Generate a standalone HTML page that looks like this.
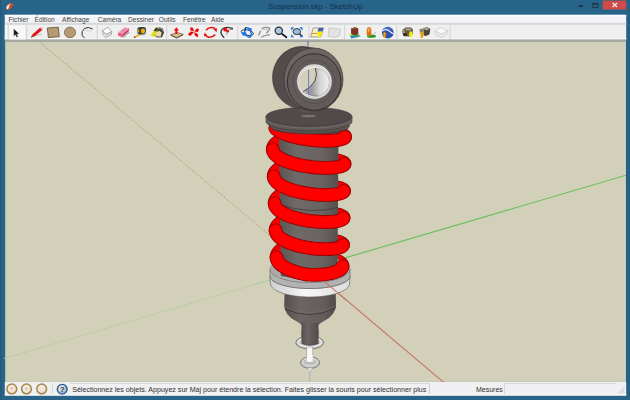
<!DOCTYPE html>
<html><head><meta charset="utf-8">
<style>
html,body{margin:0;padding:0;}
body{width:630px;height:400px;overflow:hidden;position:relative;background:#286489;font-family:"Liberation Sans",sans-serif;}
.abs{position:absolute;}
#ttext{left:0.5px;top:2px;width:630px;text-align:center;font-size:7.7px;color:#17304a;}
#menu{left:0;top:0;width:630px;height:30px;}
.mi{position:absolute;top:16.4px;font-size:6.6px;color:#444;}
</style></head><body>
<svg class="abs" style="left:0;top:0" width="630" height="400" viewBox="0 0 630 400">
  <rect x="0" y="0" width="630" height="400" fill="#286489"/>
  <rect x="0" y="0" width="1.5" height="400" fill="#245a7c"/>
  <rect x="628.2" y="0" width="1.8" height="400" fill="#2a5f80"/>
  <rect x="626.2" y="12" width="2" height="386" fill="#1f6391"/>
  <!-- menu bar -->
  <rect x="4.8" y="14.75" width="621.4" height="10" fill="#f2f4f7"/>
  <rect x="4.8" y="14.9" width="621.4" height="1.6" fill="#fbfcfd"/>
  <rect x="4.8" y="22.8" width="621.4" height="2" fill="#d9d9d9"/>
  <!-- toolbar -->
  <rect x="4.8" y="24.8" width="621.4" height="15" fill="#efefef"/>
  <rect x="4.8" y="38" width="621.4" height="1.5" fill="#f7f7f7"/>
  <rect x="4.8" y="39.5" width="621.4" height="2.1" fill="#aaa79c"/>
  <!-- viewport -->
  <rect x="5.2" y="41.6" width="620" height="340.3" fill="#d3d0b9"/>
  <rect x="624.6" y="41.6" width="1.2" height="340.3" fill="#dedbc8"/>
  <!-- status -->
  <rect x="4.8" y="381.9" width="621.4" height="13.8" fill="#f0f0f2"/>
  <rect x="4.8" y="393.6" width="621.4" height="1.8" fill="#f6f5f3"/>
</svg>
<div id="title" class="abs" style="left:0;top:0;width:630px;height:14px;">
  <svg class="abs" style="left:0;top:0" width="630" height="14" viewBox="0 0 630 14">
    <path d="M13.6 4 Q12.5 3.2 11 3.6 L9.5 4 Q7 5 6.3 7.5 Q6.2 9.2 7.6 9.8 Q9.5 10 11 8.5 Z" fill="#d84a2c"/>
    <path d="M11.2 3.5 Q9.5 3.2 8 4.6 L7.8 7 Q9.5 6.5 11.2 3.5 Z" fill="#f0a060"/>
    <path d="M8.2 4.8 Q6.4 5.8 6.3 8 Q6.6 9.5 7.8 9.6 Q8.6 8 9.4 6 Z" fill="#f4f0ea"/>
    <rect x="578.5" y="5.3" width="4.5" height="1.6" fill="#1b3040"/>
    <rect x="592.8" y="3.3" width="5.2" height="4.2" fill="none" stroke="#1b3040" stroke-width="0.8"/>
    <rect x="592.8" y="3.3" width="5.2" height="1.2" fill="#1b3040"/>
    <rect x="602.7" y="0.6" width="23.5" height="8.9" fill="#cf4b48"/>
    <path d="M612.6 3.1 L617 7.1 M617 3.1 L612.6 7.1" stroke="#f8eaea" stroke-width="1.3"/>
  </svg>
  <div id="ttext" class="abs">Suspension.skp - SketchUp</div>
</div>
<div id="menu" class="abs">
  <span class="mi" style="left:8.6px">Fichier</span>
  <span class="mi" style="left:34.6px">Édition</span>
  <span class="mi" style="left:62px">Affichage</span>
  <span class="mi" style="left:97.8px">Caméra</span>
  <span class="mi" style="left:128px">Dessiner</span>
  <span class="mi" style="left:158.8px">Outils</span>
  <span class="mi" style="left:183px">Fenêtre</span>
  <span class="mi" style="left:211px">Aide</span>
</div>
<svg class="abs" style="left:0;top:0" width="630" height="41" viewBox="0 0 630 41">
<defs>
<filter id="soft" x="-20%" y="-20%" width="140%" height="140%"><feGaussianBlur stdDeviation="0.25"/></filter>
</defs>
<rect x="4.8" y="25" width="2.8" height="14" fill="#f7f7f7"/>
<rect x="7.6" y="25.4" width="1.5" height="13.8" fill="#dcdcdc"/>
<rect x="9.2" y="25.3" width="15.8" height="14.2" fill="#f8f8f8"/>
<g fill="#d9d9d9">
<rect x="25.8" y="25.5" width="1.5" height="13.5"/>
<rect x="96.6" y="25.5" width="1.3" height="13.5"/>
<rect x="166" y="25.5" width="1.3" height="13.5"/>
<rect x="237" y="25.5" width="1.3" height="13.5"/>
<rect x="308.3" y="25.5" width="1.3" height="13.5"/>
<rect x="344" y="25.5" width="1.3" height="13.5"/>
<rect x="396" y="25.5" width="1.3" height="13.5"/>
<rect x="449.5" y="25.5" width="1.3" height="13.5"/>
</g>
<g filter="url(#soft)">
<!-- select arrow -->
<path d="M13.6 28.4 L19.4 34 L16.9 34.2 L18.2 36.8 L16.7 37.4 L15.4 34.8 L13.6 36.4 Z" fill="#181818" stroke="#ffffff" stroke-width="0.4"/>
<!-- pencil -->
<path d="M33.8 35.8 L41.8 34.2" stroke="#b4b4b4" stroke-width="0.9"/>
<path d="M31.2 37.5 L32.6 34.2 L40 27.8 L42.2 30 L34.8 36.2 Z" fill="#dc1515"/>
<path d="M40 27.8 L41 27 L43 29.1 L42.2 30 Z" fill="#f090b0"/>
<path d="M31.2 37.5 L31.9 35.4 L33.3 36.8 Z" fill="#2a2a2a"/>
<path d="M32.2 35.2 L33.4 36.6" stroke="#e8d870" stroke-width="0.5"/>
<!-- rectangle -->
<path d="M47.3 28 L58.3 27.2 L59.3 36.6 L48.4 37.6 Z" fill="#b39b72" stroke="#5e4b30" stroke-width="0.8"/>
<!-- circle -->
<ellipse cx="70" cy="32.4" rx="5.6" ry="5.3" fill="#b49a72" stroke="#6d5a3e" stroke-width="0.7"/>
<!-- arc -->
<path d="M92.8 29 Q88 26.2 84.5 28.5 Q80.8 31.5 82.2 35.5 Q83 37 84.6 37.7" fill="none" stroke="#333" stroke-width="1"/>
<path d="M85.5 30.8 L91.2 30.6" stroke="#d0d0d0" stroke-width="0.9"/>
<!-- component box -->
<path d="M102.4 30.6 L108 27.2 L111.7 31.7 L105.8 34.5 Z" fill="#ffffff" stroke="#9a9a9a" stroke-width="0.8"/>
<path d="M102.4 30.6 L103.4 35 L105.8 37.7 L111.4 34.4 L111.7 31.7 L105.8 34.5 Z" fill="#ececec" stroke="#9a9a9a" stroke-width="0.8"/>
<path d="M106 36 L111 33.2" stroke="#bdbdbd" stroke-width="0.5"/>
<!-- eraser -->
<path d="M118.2 32.6 L124.6 27.3 L129.2 28.3 L122.8 33.8 Z" fill="#f59ab6"/>
<path d="M118.2 32.6 L122.8 33.8 L122.2 37.4 L118 35.6 Z" fill="#e9607f"/>
<path d="M122.8 33.8 L129.2 28.3 L128.6 31.6 L122.2 37.4 Z" fill="#cc4565"/>
<path d="M122.6 37.6 L128.8 31.8 L129.8 32.4 L123.6 37.8 Z" fill="#6a6a6a" opacity="0.55"/>
<path d="M121.5 31.8 L125.5 28.6" stroke="#b04060" stroke-width="0.7" opacity="0.7"/>
<!-- tape measure -->
<path d="M134.2 36.8 L140 33.2 L141 34.6 L135.4 37.8 Z" fill="#e5b000"/>
<path d="M134 36.6 L135.2 37.8" stroke="#333" stroke-width="1.1"/>
<path d="M137.4 28.5 Q138 26.9 140 26.9 L144 26.9 Q146 27.1 146 29.3 L145.8 32.6 Q145.4 34.4 143.4 34.4 L139.5 34.4 Q137.2 34.2 137.2 32 Z" fill="#3a4048"/>
<ellipse cx="143" cy="31" rx="2.1" ry="2.6" fill="#f3b400"/>
<path d="M137.2 29.5 L139 29.2 L139.2 32.4 L137.4 32.6 Z" fill="#d9a800"/>
<path d="M140 35 L146 34.8" stroke="#9a9a9a" stroke-width="0.8" opacity="0.7"/>
<!-- paint bucket -->
<path d="M155 29.4 L159.5 27.2 L162.8 28.6 L164 32.8 L162 37.2 L156.6 37.6 L154.6 34.4 Z" fill="#404040"/>
<path d="M155.6 32.2 L159.4 30.8 L161.6 32.6 L160.8 36.4 L156.6 36.6 L155.2 34.2 Z" fill="#e9dcaa"/>
<path d="M158 28.2 L162 28.8 L163 31.6" stroke="#a0a0a0" stroke-width="0.8" fill="none"/>
<path d="M150.6 35.6 L156 27.6 L158.2 28 L154.2 37 Z" fill="#e6de00"/>
<path d="M153.6 30.8 L156 27.6 L158.2 28 L156 31.6 Z" fill="#3a3a22"/>
<!-- push/pull -->
<path d="M170.6 34.8 L177 32.5 L183.2 34.3 L176.8 37.7 Z" fill="#d4c096" stroke="#6e5430" stroke-width="0.7"/>
<path d="M170.6 34.8 L170.9 35.8 L176.8 38.4 L183.2 35.3 L183.2 34.3 L176.8 37.7 Z" fill="#5f4626"/>
<path d="M176.3 27.2 L178.9 30.5 L177.4 30.5 L177.4 34 L175.3 34 L175.3 30.5 L173.8 30.5 Z" fill="#ee0b0b"/>
<!-- move -->
<g fill="#e80a0a">
<path d="M194.3 31.6 L192.6 27.6 L190.2 27.6 L190.4 30.4 Z"/>
<path d="M194.3 31.6 L197.6 32.2 L199.2 29.6 L197 28.2 Z"/>
<path d="M194 32.2 L190.6 31.6 L187.8 34.6 L190.4 36 Z"/>
<path d="M194.3 32 L194.8 35.4 L197.4 37.2 L198.4 34.4 Z"/>
</g>
<!-- rotate -->
<path d="M206 30.2 Q208.4 27.2 212.2 27.5 Q214.6 27.8 215.5 29.6" fill="none" stroke="#e01414" stroke-width="1.5"/>
<path d="M215.3 34.6 Q212.8 37.6 209 37.3 Q206.6 37 205.7 35.2" fill="none" stroke="#e01414" stroke-width="1.5"/>
<path d="M213.4 29.2 L217 28.2 L216.6 32.2 Z" fill="#e01414"/>
<path d="M207.6 35.4 L204 36.6 L204.4 32.6 Z" fill="#e01414"/>
<!-- offset -->
<path d="M224.2 37.7 Q219.6 33.6 221.6 29.8 Q223.6 27.2 227 27.4 Q231 27.6 233 28.6" fill="none" stroke="#3a3a3a" stroke-width="1.3"/>
<path d="M226.6 34.6 Q226.8 31 229 29.8 Q231 29.2 233 29.5" fill="none" stroke="#8a8a8a" stroke-width="0.9"/>
<circle cx="225.2" cy="29.4" r="2" fill="#ee0a0a"/>
<circle cx="227.7" cy="31.2" r="1.3" fill="#d81010"/>
<!-- orbit -->
<ellipse cx="247.3" cy="32.6" rx="6.2" ry="2.6" fill="none" stroke="#2f2f2f" stroke-width="0.9" transform="rotate(12 247.3 32.6)"/>
<ellipse cx="248" cy="32.4" rx="2.8" ry="5" fill="none" stroke="#1f72ea" stroke-width="1.6" transform="rotate(-25 248 32.4)"/>
<path d="M241 32.6 L245 32 L246.8 35.6 L243 35.8 Z" fill="#1f72ea"/>
<path d="M248.2 27.6 L252 28.4 L251.4 31 L248.6 30 Z" fill="#1f72ea"/>
<path d="M246 27 L245 30.5" stroke="#2a2a2a" stroke-width="1"/>
<!-- pan -->
<path d="M258.6 35.6 L260.6 30.8 M261.6 28.8 Q265.6 26.6 269.6 28 Q270 30 268.2 31 L266.4 33.4 M261 37.2 Q265 35 269.8 34.6" fill="none" stroke="#8c8c8c" stroke-width="1.3"/>
<path d="M262.5 29.6 Q265 29.2 267.8 29.6" fill="none" stroke="#b0b0b0" stroke-width="0.8"/>
<!-- zoom -->
<path d="M281 33.1 L286.4 37.3" stroke="#1a1a1a" stroke-width="1.8" stroke-linecap="round"/>
<circle cx="278.8" cy="30.8" r="3.6" fill="#a8c8e8" stroke="#2a2a2a" stroke-width="1.2"/>
<!-- zoom extents -->
<ellipse cx="296.8" cy="31.6" rx="3.8" ry="3" fill="#98bcd8" stroke="#333" stroke-width="1"/>
<path d="M299.6 34 L302.3 36.8" stroke="#1a1a1a" stroke-width="1.4"/>
<g fill="#1f6fe6">
<path d="M291 27.3 L294.2 27.4 L291.2 30.4 Z"/>
<path d="M302.6 27.3 L302.5 30.4 L299.4 27.4 Z"/>
<path d="M291 37.3 L291.2 34.2 L294.2 37.2 Z"/>
<path d="M302.6 37.3 L299.5 37.3 L302.5 34.3 Z"/>
</g>
<!-- photo texture -->
<path d="M313.2 28 L323.6 27.8 L320.7 36.9 L310.6 37 Z" fill="#f8f0c0" stroke="#7a7a7a" stroke-width="0.7"/>
<path d="M318.5 28 L323.5 27.9 L322.4 31.6 L317.5 31.8 Z" fill="#4060b0"/>
<path d="M317.5 31.8 L322.4 31.6 L320.7 36.9 L318 37 Z" fill="#eeee00"/>
<path d="M311.6 33.6 L317.2 33.4" stroke="#e88a1a" stroke-width="1"/>
<!-- next (gray) -->
<path d="M329 28 L334 28.6 L340.5 29.4 L339.5 35.8 L334.5 37.5 L328.2 36.4 Z" fill="#e2e2e2" stroke="#c4c4c4" stroke-width="0.8"/>
<!-- get models -->
<path d="M347.8 34 L351 33 L360.8 36.2 L357 38 Z" fill="#eeee88"/>
<path d="M349.6 35.6 L358.5 34.6 L360.8 36.2 L351.5 38.3 Z" fill="#3bb050"/>
<path d="M350.5 36.8 L359 35.8 L358 37 L351.2 38.5 Z" fill="#2a88d8"/>
<path d="M351 28.4 L355 27.2 L358.2 28.2 L358.3 34.4 L354.5 35.2 L351.2 34.3 Z" fill="#7a3520"/>
<path d="M351 28.4 L355 27.2 L358.2 28.2 L354.5 29 Z" fill="#9c5a3c"/>
<!-- share model -->
<ellipse cx="371.5" cy="36.2" rx="4.5" ry="1.6" fill="#2c9a2a"/>
<path d="M372.5 35 L376 32" stroke="#a8a8a8" stroke-width="0.7"/>
<ellipse cx="369" cy="31.6" rx="2.4" ry="4.6" fill="#e27010"/>
<ellipse cx="368.6" cy="30" rx="1.2" ry="2.4" fill="#f3a040"/>
<!-- globe -->
<circle cx="387.8" cy="32.6" r="5.9" fill="#2d4fb4"/>
<path d="M382.5 31 Q386 28 390 31.5 Q392.5 34 393.5 33" fill="none" stroke="#e8eef8" stroke-width="1.2"/>
<path d="M384 28.5 Q388 27 392 29" fill="none" stroke="#6a90d8" stroke-width="0.8"/>
<path d="M384.6 31.8 L387 34.4 L385.6 34.4 L385.6 37.8 L383.6 37.8 L383.6 34.4 L382.2 34.4 Z" fill="#f7a000"/>
<!-- component share 1 -->
<path d="M402.4 30 L405.5 27.4 L411 27.6 L413 29.5 L412.6 34.8 L409 36.6 L404 36.2 L402.6 33.5 Z" fill="#5e554a"/>
<path d="M405 28.4 L410.4 28.4 L411.8 30 L406.5 30.6 Z" fill="#b8a886"/>
<path d="M402.6 30.6 L404.6 29.6 L405 33 L403 33.4 Z" fill="#a89878"/>
<path d="M402.8 33.6 L406 33.4 L407 35.6 L403.6 35.8 Z" fill="#1e1e1e"/>
<path d="M409.3 31.4 L412.4 31.4 L412.4 34.2 L413.4 34.2 L410.8 37.6 L408.2 34.2 L409.3 34.2 Z" fill="#eeee00"/>
<!-- component share 2 -->
<path d="M423.4 28 L427.6 27.2 L430.4 29 L429.4 34.4 L426 36 L423.6 35.4 Z" fill="#4a443c"/>
<path d="M423.6 28.4 L427.4 27.6 L429.6 29.2 L425.6 30.4 Z" fill="#b0a080"/>
<path d="M419.4 29.6 L422 28.4 L423.4 29.6 L423 32.2 L420 32.4 Z" fill="#8a8070"/>
<path d="M421.8 31.4 L424.4 34 L423 34 L423 38 L420.6 38 L420.6 34 L419.2 34 Z" fill="#f29a00"/>
<!-- component share 3 faded -->
<path d="M435 31 L440.6 27.4 L447.4 30.6 L441.8 34.4 Z" fill="#f8f8f8" stroke="#c8c8c8" stroke-width="0.7"/>
<path d="M435 31 L435.6 34.4 L441.6 37.8 L447 34.2 L447.4 30.6 L441.8 34.4 Z" fill="#ededed" stroke="#c8c8c8" stroke-width="0.7"/>
</g>
</svg>
<svg class="abs" style="left:0;top:0" width="630" height="400" viewBox="0 0 630 400">
<defs>
<clipPath id="axclipR"><path d="M318 281.5 L360 281.5 L360 300 L338 300 L337 292 L318 292 Z"/></clipPath>
<clipPath id="vclip"><rect x="4" y="41" width="622" height="341"/></clipPath>
<linearGradient id="gCyl" x1="0" y1="0" x2="1" y2="0">
 <stop offset="0" stop-color="#5a5453"/><stop offset="0.3" stop-color="#6f6967"/><stop offset="0.72" stop-color="#696362"/><stop offset="1" stop-color="#544e4d"/></linearGradient>
<linearGradient id="gBulb" x1="0" y1="0" x2="1" y2="0">
 <stop offset="0" stop-color="#554d4d"/><stop offset="0.3" stop-color="#6b6463"/><stop offset="0.75" stop-color="#645d5c"/><stop offset="1" stop-color="#514a4a"/></linearGradient>
<linearGradient id="gStem" gradientUnits="userSpaceOnUse" x1="301.5" y1="0" x2="318.5" y2="0">
 <stop offset="0" stop-color="#564f4e"/><stop offset="0.35" stop-color="#6a6362"/><stop offset="1" stop-color="#524b4a"/></linearGradient>
<linearGradient id="gSide" x1="0" y1="0" x2="1" y2="0">
 <stop offset="0" stop-color="#3f3a3a"/><stop offset="0.5" stop-color="#555050"/><stop offset="1" stop-color="#4a4544"/></linearGradient>
<linearGradient id="gWhite" x1="0" y1="0" x2="1" y2="0">
 <stop offset="0" stop-color="#cfcfcf"/><stop offset="0.45" stop-color="#f6f6f6"/><stop offset="1" stop-color="#dcdcdc"/></linearGradient>
<linearGradient id="gPlateTop" x1="0" y1="0" x2="1" y2="0">
 <stop offset="0" stop-color="#a9a9a9"/><stop offset="0.5" stop-color="#bdbdbd"/><stop offset="1" stop-color="#b3b3b3"/></linearGradient>
<linearGradient id="gHole" gradientUnits="userSpaceOnUse" x1="312" y1="0" x2="329" y2="0">
 <stop offset="0" stop-color="#9c9c9c"/><stop offset="0.45" stop-color="#d4d4d4"/><stop offset="1" stop-color="#f0f0f0"/></linearGradient>
</defs>
<g clip-path="url(#vclip)">
<path d="M39 41.4 L309.0 268.5" stroke="#c79a88" stroke-width="1.1" stroke-dasharray="1.2 1.4"/>
<path d="M309.0 268.5 L445 383.5" stroke="#c8766a" stroke-width="1.1"/>
<path d="M4 358.5 L309.0 268.5" stroke="#9fcc90" stroke-width="1" stroke-dasharray="1.3 1.3"/>
<path d="M309.0 268.5 L627 175" stroke="#66c05a" stroke-width="1.1"/>
<path d="M307.9 41 L307.9 268.5" stroke="#6a6ac8" stroke-width="1.1"/>
<path d="M309.8 268.5 L309.8 383" stroke="#8a8ab8" stroke-width="1" stroke-dasharray="1.3 1.3"/>
<path d="M284.6 290 L335.6 290 L336 306 Q335 315 325 320.5 Q320 323 318.5 325 L301.5 325 Q300 323 295 320.5 Q285 315 284.2 306 Z" fill="url(#gBulb)"/>
<rect x="301.5" y="323" width="17" height="23" fill="url(#gStem)"/>
<path d="M284.6 308.6 Q310 321 336 307.6" fill="none" stroke="#3a3535" stroke-width="0.8"/>
<path d="M284.8 307 Q310 319.4 335.8 306" fill="none" stroke="#7a7270" stroke-width="0.5"/>
<path d="M270.5 283.5 A39.6 13.5 0 0 0 349.6 283.5" fill="none" stroke="#6a6a6a" stroke-width="0.5"/>
<ellipse cx="309.7" cy="342.6" rx="14" ry="6.4" fill="#c6c6c6" stroke="#5a5a5a" stroke-width="0.7"/>
<ellipse cx="309.7" cy="342.2" rx="11.6" ry="4.6" fill="none" stroke="#eeeeee" stroke-width="1.1"/>
<path d="M301.5 330 L318.5 330 L318.5 343.5 Q310 347 301.5 343.5 Z" fill="url(#gStem)"/>
<path d="M301.5 343.5 Q310 347 318.5 343.5" fill="none" stroke="#3a3a3a" stroke-width="0.6"/>
<rect x="306.8" y="347" width="6" height="15" fill="#f6f6f6" stroke="#8a8a8a" stroke-width="0.5"/>
<ellipse cx="310" cy="362.6" rx="9.6" ry="5.8" fill="#c0c0c0" stroke="#5e5e5e" stroke-width="0.7"/>
<ellipse cx="310" cy="362" rx="7.4" ry="3.9" fill="none" stroke="#e6e6e6" stroke-width="1"/>
<path d="M306.8 355 L312.8 355 L312.8 362 Q309.8 363.4 306.8 362 Z" fill="#f8f8f8"/>
<path d="M306.8 362 Q309.8 363.4 312.8 362" fill="none" stroke="#7a7a7a" stroke-width="0.5"/>
<path d="M307.6 368 L312.4 368 L310 372.5 Z" fill="#e6e6e6" stroke="#999" stroke-width="0.4"/>
<path d="M344.98 136.85 L344.86 136.40 L344.52 135.95 L343.95 135.51 L343.17 135.08 L342.18 134.67 L340.99 134.27 L339.59 133.91 L338.00 133.57 L336.24 133.26 L334.30 132.99 L332.21 132.77 L329.97 132.58 L327.61 132.45 L325.13 132.37 L322.54 132.34 L319.88 132.37 L317.15 132.45 L314.36 132.60 L311.54 132.80 L308.71 133.07 L305.88 133.39 L303.07 133.78 L300.29 134.24 L297.57 134.75 L294.91 135.32 L292.34 135.95 L289.88 136.64 L287.53 137.38 L285.32 138.17 L283.25 139.02 L281.34 139.91 L279.59 140.84 L278.03 141.81 L276.66 142.81 L275.49 143.85 L274.52 144.92 L273.77 146.00 L273.23 147.11 L272.91 148.22 L272.81 149.35 M344.48 163.86 L344.36 163.40 L344.03 162.94 L343.48 162.50 L342.71 162.06 L341.74 161.64 L340.56 161.24 L339.20 160.86 L337.64 160.52 L335.91 160.20 L334.01 159.93 L331.96 159.70 L329.77 159.51 L327.45 159.38 L325.02 159.29 L322.49 159.26 L319.88 159.28 L317.20 159.36 L314.47 159.51 L311.71 159.71 L308.93 159.97 L306.16 160.30 L303.40 160.69 L300.68 161.14 L298.01 161.66 L295.41 162.23 L292.89 162.87 L290.48 163.56 L288.18 164.30 L286.01 165.10 L283.98 165.95 L282.11 166.84 L280.40 167.78 L278.87 168.76 L277.52 169.77 L276.38 170.81 L275.43 171.88 L274.69 172.98 L274.16 174.09 L273.85 175.21 L273.75 176.34 M343.98 190.86 L343.86 190.40 L343.54 189.93 L343.00 189.48 L342.25 189.03 L341.30 188.61 L340.14 188.20 L338.80 187.82 L337.28 187.47 L335.58 187.15 L333.73 186.87 L331.72 186.63 L329.57 186.44 L327.30 186.30 L324.92 186.21 L322.44 186.17 L319.88 186.19 L317.25 186.27 L314.58 186.41 L311.87 186.62 L309.15 186.88 L306.44 187.21 L303.73 187.60 L301.07 188.05 L298.45 188.57 L295.91 189.15 L293.44 189.78 L291.08 190.48 L288.82 191.23 L286.70 192.03 L284.71 192.88 L282.87 193.78 L281.20 194.72 L279.70 195.70 L278.39 196.72 L277.26 197.77 L276.33 198.85 L275.61 199.95 L275.09 201.07 L274.79 202.20 L274.69 203.34 M343.48 217.86 L343.37 217.39 L343.05 216.92 L342.52 216.46 L341.78 216.01 L340.85 215.57 L339.72 215.16 L338.41 214.77 L336.92 214.41 L335.26 214.09 L333.44 213.81 L331.47 213.57 L329.37 213.37 L327.14 213.22 L324.81 213.13 L322.38 213.09 L319.88 213.11 L317.31 213.19 L314.69 213.32 L312.04 213.53 L309.38 213.79 L306.71 214.12 L304.07 214.51 L301.46 214.96 L298.90 215.48 L296.40 216.06 L293.99 216.70 L291.67 217.39 L289.47 218.15 L287.39 218.95 L285.44 219.81 L283.64 220.72 L282.01 221.66 L280.54 222.65 L279.25 223.68 L278.15 224.73 L277.24 225.82 L276.53 226.92 L276.03 228.05 L275.73 229.19 L275.63 230.33 M342.98 244.87 L342.87 244.39 L342.56 243.91 L342.04 243.44 L341.32 242.99 L340.41 242.54 L339.30 242.12 L338.02 241.73 L336.56 241.36 L334.93 241.04 L333.15 240.75 L331.22 240.50 L329.17 240.30 L326.99 240.15 L324.70 240.05 L322.33 240.01 L319.87 240.02 L317.36 240.10 L314.80 240.23 L312.20 240.43 L309.60 240.70 L306.99 241.02 L304.40 241.42 L301.85 241.87 L299.34 242.39 L296.90 242.97 L294.54 243.61 L292.27 244.31 L290.11 245.07 L288.08 245.88 L286.17 246.74 L284.41 247.65 L282.81 248.61 L281.38 249.60 L280.12 250.63 L279.04 251.69 L278.15 252.78 L277.45 253.90 L276.96 255.03 L276.66 256.17 L276.57 257.33 M342.48 266.13 L342.47 265.88 L342.43 265.64 L342.38 265.39 L342.30 265.14 L342.20 264.89 L342.08 264.65 L341.94 264.40 L341.78 264.16 L341.59 263.91 L341.39 263.67 L341.16 263.43 L340.91 263.19 L340.64 262.95 L340.36 262.71 L340.05 262.48 L339.72 262.25 L339.37 262.02 L339.00 261.79 L338.62 261.57 L338.21 261.35 L337.79 261.13 L337.34 260.91 L336.88 260.70 L336.40 260.50 L335.91 260.29 L335.39 260.09 L334.86 259.90 L334.32 259.70 L333.75 259.52 L333.17 259.33 L332.58 259.16 L331.97 258.98 L331.34 258.81 L330.71 258.65 L330.05 258.49 L329.39 258.34 L328.71 258.19 L328.02 258.04 L327.32 257.91 L326.61 257.78 " fill="none" stroke="#8a0000" stroke-width="13.799999999999999" stroke-linecap="round"/>
<path d="M344.98 136.85 L344.86 136.40 L344.52 135.95 L343.95 135.51 L343.17 135.08 L342.18 134.67 L340.99 134.27 L339.59 133.91 L338.00 133.57 L336.24 133.26 L334.30 132.99 L332.21 132.77 L329.97 132.58 L327.61 132.45 L325.13 132.37 L322.54 132.34 L319.88 132.37 L317.15 132.45 L314.36 132.60 L311.54 132.80 L308.71 133.07 L305.88 133.39 L303.07 133.78 L300.29 134.24 L297.57 134.75 L294.91 135.32 L292.34 135.95 L289.88 136.64 L287.53 137.38 L285.32 138.17 L283.25 139.02 L281.34 139.91 L279.59 140.84 L278.03 141.81 L276.66 142.81 L275.49 143.85 L274.52 144.92 L273.77 146.00 L273.23 147.11 L272.91 148.22 L272.81 149.35 M344.48 163.86 L344.36 163.40 L344.03 162.94 L343.48 162.50 L342.71 162.06 L341.74 161.64 L340.56 161.24 L339.20 160.86 L337.64 160.52 L335.91 160.20 L334.01 159.93 L331.96 159.70 L329.77 159.51 L327.45 159.38 L325.02 159.29 L322.49 159.26 L319.88 159.28 L317.20 159.36 L314.47 159.51 L311.71 159.71 L308.93 159.97 L306.16 160.30 L303.40 160.69 L300.68 161.14 L298.01 161.66 L295.41 162.23 L292.89 162.87 L290.48 163.56 L288.18 164.30 L286.01 165.10 L283.98 165.95 L282.11 166.84 L280.40 167.78 L278.87 168.76 L277.52 169.77 L276.38 170.81 L275.43 171.88 L274.69 172.98 L274.16 174.09 L273.85 175.21 L273.75 176.34 M343.98 190.86 L343.86 190.40 L343.54 189.93 L343.00 189.48 L342.25 189.03 L341.30 188.61 L340.14 188.20 L338.80 187.82 L337.28 187.47 L335.58 187.15 L333.73 186.87 L331.72 186.63 L329.57 186.44 L327.30 186.30 L324.92 186.21 L322.44 186.17 L319.88 186.19 L317.25 186.27 L314.58 186.41 L311.87 186.62 L309.15 186.88 L306.44 187.21 L303.73 187.60 L301.07 188.05 L298.45 188.57 L295.91 189.15 L293.44 189.78 L291.08 190.48 L288.82 191.23 L286.70 192.03 L284.71 192.88 L282.87 193.78 L281.20 194.72 L279.70 195.70 L278.39 196.72 L277.26 197.77 L276.33 198.85 L275.61 199.95 L275.09 201.07 L274.79 202.20 L274.69 203.34 M343.48 217.86 L343.37 217.39 L343.05 216.92 L342.52 216.46 L341.78 216.01 L340.85 215.57 L339.72 215.16 L338.41 214.77 L336.92 214.41 L335.26 214.09 L333.44 213.81 L331.47 213.57 L329.37 213.37 L327.14 213.22 L324.81 213.13 L322.38 213.09 L319.88 213.11 L317.31 213.19 L314.69 213.32 L312.04 213.53 L309.38 213.79 L306.71 214.12 L304.07 214.51 L301.46 214.96 L298.90 215.48 L296.40 216.06 L293.99 216.70 L291.67 217.39 L289.47 218.15 L287.39 218.95 L285.44 219.81 L283.64 220.72 L282.01 221.66 L280.54 222.65 L279.25 223.68 L278.15 224.73 L277.24 225.82 L276.53 226.92 L276.03 228.05 L275.73 229.19 L275.63 230.33 M342.98 244.87 L342.87 244.39 L342.56 243.91 L342.04 243.44 L341.32 242.99 L340.41 242.54 L339.30 242.12 L338.02 241.73 L336.56 241.36 L334.93 241.04 L333.15 240.75 L331.22 240.50 L329.17 240.30 L326.99 240.15 L324.70 240.05 L322.33 240.01 L319.87 240.02 L317.36 240.10 L314.80 240.23 L312.20 240.43 L309.60 240.70 L306.99 241.02 L304.40 241.42 L301.85 241.87 L299.34 242.39 L296.90 242.97 L294.54 243.61 L292.27 244.31 L290.11 245.07 L288.08 245.88 L286.17 246.74 L284.41 247.65 L282.81 248.61 L281.38 249.60 L280.12 250.63 L279.04 251.69 L278.15 252.78 L277.45 253.90 L276.96 255.03 L276.66 256.17 L276.57 257.33 M342.48 266.13 L342.47 265.88 L342.43 265.64 L342.38 265.39 L342.30 265.14 L342.20 264.89 L342.08 264.65 L341.94 264.40 L341.78 264.16 L341.59 263.91 L341.39 263.67 L341.16 263.43 L340.91 263.19 L340.64 262.95 L340.36 262.71 L340.05 262.48 L339.72 262.25 L339.37 262.02 L339.00 261.79 L338.62 261.57 L338.21 261.35 L337.79 261.13 L337.34 260.91 L336.88 260.70 L336.40 260.50 L335.91 260.29 L335.39 260.09 L334.86 259.90 L334.32 259.70 L333.75 259.52 L333.17 259.33 L332.58 259.16 L331.97 258.98 L331.34 258.81 L330.71 258.65 L330.05 258.49 L329.39 258.34 L328.71 258.19 L328.02 258.04 L327.32 257.91 L326.61 257.78 " fill="none" stroke="#d80000" stroke-width="12.6" stroke-linecap="round"/>
<path d="M344.98 136.85 L344.86 136.40 L344.52 135.95 L343.95 135.51 L343.17 135.08 L342.18 134.67 L340.99 134.27 L339.59 133.91 L338.00 133.57 L336.24 133.26 L334.30 132.99 L332.21 132.77 L329.97 132.58 L327.61 132.45 L325.13 132.37 L322.54 132.34 L319.88 132.37 L317.15 132.45 L314.36 132.60 L311.54 132.80 L308.71 133.07 L305.88 133.39 L303.07 133.78 L300.29 134.24 L297.57 134.75 L294.91 135.32 L292.34 135.95 L289.88 136.64 L287.53 137.38 L285.32 138.17 L283.25 139.02 L281.34 139.91 L279.59 140.84 L278.03 141.81 L276.66 142.81 L275.49 143.85 L274.52 144.92 L273.77 146.00 L273.23 147.11 L272.91 148.22 L272.81 149.35 M344.48 163.86 L344.36 163.40 L344.03 162.94 L343.48 162.50 L342.71 162.06 L341.74 161.64 L340.56 161.24 L339.20 160.86 L337.64 160.52 L335.91 160.20 L334.01 159.93 L331.96 159.70 L329.77 159.51 L327.45 159.38 L325.02 159.29 L322.49 159.26 L319.88 159.28 L317.20 159.36 L314.47 159.51 L311.71 159.71 L308.93 159.97 L306.16 160.30 L303.40 160.69 L300.68 161.14 L298.01 161.66 L295.41 162.23 L292.89 162.87 L290.48 163.56 L288.18 164.30 L286.01 165.10 L283.98 165.95 L282.11 166.84 L280.40 167.78 L278.87 168.76 L277.52 169.77 L276.38 170.81 L275.43 171.88 L274.69 172.98 L274.16 174.09 L273.85 175.21 L273.75 176.34 M343.98 190.86 L343.86 190.40 L343.54 189.93 L343.00 189.48 L342.25 189.03 L341.30 188.61 L340.14 188.20 L338.80 187.82 L337.28 187.47 L335.58 187.15 L333.73 186.87 L331.72 186.63 L329.57 186.44 L327.30 186.30 L324.92 186.21 L322.44 186.17 L319.88 186.19 L317.25 186.27 L314.58 186.41 L311.87 186.62 L309.15 186.88 L306.44 187.21 L303.73 187.60 L301.07 188.05 L298.45 188.57 L295.91 189.15 L293.44 189.78 L291.08 190.48 L288.82 191.23 L286.70 192.03 L284.71 192.88 L282.87 193.78 L281.20 194.72 L279.70 195.70 L278.39 196.72 L277.26 197.77 L276.33 198.85 L275.61 199.95 L275.09 201.07 L274.79 202.20 L274.69 203.34 M343.48 217.86 L343.37 217.39 L343.05 216.92 L342.52 216.46 L341.78 216.01 L340.85 215.57 L339.72 215.16 L338.41 214.77 L336.92 214.41 L335.26 214.09 L333.44 213.81 L331.47 213.57 L329.37 213.37 L327.14 213.22 L324.81 213.13 L322.38 213.09 L319.88 213.11 L317.31 213.19 L314.69 213.32 L312.04 213.53 L309.38 213.79 L306.71 214.12 L304.07 214.51 L301.46 214.96 L298.90 215.48 L296.40 216.06 L293.99 216.70 L291.67 217.39 L289.47 218.15 L287.39 218.95 L285.44 219.81 L283.64 220.72 L282.01 221.66 L280.54 222.65 L279.25 223.68 L278.15 224.73 L277.24 225.82 L276.53 226.92 L276.03 228.05 L275.73 229.19 L275.63 230.33 M342.98 244.87 L342.87 244.39 L342.56 243.91 L342.04 243.44 L341.32 242.99 L340.41 242.54 L339.30 242.12 L338.02 241.73 L336.56 241.36 L334.93 241.04 L333.15 240.75 L331.22 240.50 L329.17 240.30 L326.99 240.15 L324.70 240.05 L322.33 240.01 L319.87 240.02 L317.36 240.10 L314.80 240.23 L312.20 240.43 L309.60 240.70 L306.99 241.02 L304.40 241.42 L301.85 241.87 L299.34 242.39 L296.90 242.97 L294.54 243.61 L292.27 244.31 L290.11 245.07 L288.08 245.88 L286.17 246.74 L284.41 247.65 L282.81 248.61 L281.38 249.60 L280.12 250.63 L279.04 251.69 L278.15 252.78 L277.45 253.90 L276.96 255.03 L276.66 256.17 L276.57 257.33 M342.48 266.13 L342.47 265.88 L342.43 265.64 L342.38 265.39 L342.30 265.14 L342.20 264.89 L342.08 264.65 L341.94 264.40 L341.78 264.16 L341.59 263.91 L341.39 263.67 L341.16 263.43 L340.91 263.19 L340.64 262.95 L340.36 262.71 L340.05 262.48 L339.72 262.25 L339.37 262.02 L339.00 261.79 L338.62 261.57 L338.21 261.35 L337.79 261.13 L337.34 260.91 L336.88 260.70 L336.40 260.50 L335.91 260.29 L335.39 260.09 L334.86 259.90 L334.32 259.70 L333.75 259.52 L333.17 259.33 L332.58 259.16 L331.97 258.98 L331.34 258.81 L330.71 258.65 L330.05 258.49 L329.39 258.34 L328.71 258.19 L328.02 258.04 L327.32 257.91 L326.61 257.78 " fill="none" stroke="#f80000" stroke-width="11.0" stroke-linecap="round"/>
<path d="M278.8 124 L338.6 124 L337.4 282 L280.8 282 Z" fill="url(#gCyl)"/>
<path d="M280 204.5 Q309 215 338 207.5" fill="none" stroke="#3a3636" stroke-width="0.7"/>
<path d="M350.00 276.00 L349.88 276.98 L349.51 277.96 L348.89 278.92 L348.04 279.86 L346.96 280.78 L345.64 281.67 L344.11 282.53 L342.36 283.35 L340.42 284.12 L338.28 284.84 L335.98 285.51 L333.51 286.11 L330.90 286.66 L328.16 287.14 L325.31 287.55 L322.36 287.89 L319.34 288.15 L316.26 288.35 L313.14 288.46 L310.00 288.50 L306.86 288.46 L303.74 288.35 L300.66 288.15 L297.64 287.89 L294.69 287.55 L291.84 287.14 L289.10 286.66 L286.49 286.11 L284.02 285.51 L281.72 284.84 L279.58 284.12 L277.64 283.35 L275.89 282.53 L274.36 281.67 L273.04 280.78 L271.96 279.86 L271.11 278.92 L270.49 277.96 L270.12 276.98 L270.00 276.00 L270.40 283.50 L270.52 284.56 L270.89 285.61 L271.49 286.65 L272.34 287.67 L273.41 288.67 L274.72 289.63 L276.24 290.55 L277.96 291.44 L279.89 292.27 L282.00 293.05 L284.28 293.77 L286.72 294.42 L289.31 295.01 L292.02 295.53 L294.85 295.97 L297.76 296.34 L300.76 296.63 L303.81 296.83 L306.89 296.96 L310.00 297.00 L313.11 296.96 L316.19 296.83 L319.24 296.63 L322.24 296.34 L325.15 295.97 L327.98 295.53 L330.69 295.01 L333.28 294.42 L335.72 293.77 L338.00 293.05 L340.11 292.27 L342.04 291.44 L343.76 290.55 L345.28 289.63 L346.59 288.67 L347.66 287.67 L348.51 286.65 L349.11 285.61 L349.48 284.56 L349.60 283.50 Z" fill="url(#gWhite)" stroke="#5a5a5a" stroke-width="0.6"/>
<path d="M350.00 269.00 L349.88 270.06 L349.51 271.11 L348.89 272.15 L348.04 273.17 L346.96 274.17 L345.64 275.13 L344.11 276.05 L342.36 276.94 L340.42 277.77 L338.28 278.55 L335.98 279.27 L333.51 279.92 L330.90 280.51 L328.16 281.03 L325.31 281.47 L322.36 281.84 L319.34 282.13 L316.26 282.33 L313.14 282.46 L310.00 282.50 L306.86 282.46 L303.74 282.33 L300.66 282.13 L297.64 281.84 L294.69 281.47 L291.84 281.03 L289.10 280.51 L286.49 279.92 L284.02 279.27 L281.72 278.55 L279.58 277.77 L277.64 276.94 L275.89 276.05 L274.36 275.13 L273.04 274.17 L271.96 273.17 L271.11 272.15 L270.49 271.11 L270.12 270.06 L270.00 269.00 L270.00 276.00 L270.12 276.98 L270.49 277.96 L271.11 278.92 L271.96 279.86 L273.04 280.78 L274.36 281.67 L275.89 282.53 L277.64 283.35 L279.58 284.12 L281.72 284.84 L284.02 285.51 L286.49 286.11 L289.10 286.66 L291.84 287.14 L294.69 287.55 L297.64 287.89 L300.66 288.15 L303.74 288.35 L306.86 288.46 L310.00 288.50 L313.14 288.46 L316.26 288.35 L319.34 288.15 L322.36 287.89 L325.31 287.55 L328.16 287.14 L330.90 286.66 L333.51 286.11 L335.98 285.51 L338.28 284.84 L340.42 284.12 L342.36 283.35 L344.11 282.53 L345.64 281.67 L346.96 280.78 L348.04 279.86 L348.89 278.92 L349.51 277.96 L349.88 276.98 L350.00 276.00 Z" fill="#b2b2b2" stroke="#5e5e5e" stroke-width="0.6"/>
<ellipse cx="310" cy="269" rx="40" ry="13.5" fill="url(#gPlateTop)" stroke="#7a7a7a" stroke-width="0.5"/>
<path d="M280.5 254 L337.6 254 L337.4 276 Q309 283 280.8 276 Z" fill="url(#gCyl)"/>
<path d="M275.28 128.28 L276.37 129.20 L277.61 130.10 L279.00 130.97 L280.52 131.82 L282.17 132.64 L283.94 133.44 L285.82 134.20 L287.81 134.92 L289.90 135.61 L292.08 136.26 L294.33 136.87 L296.64 137.44 L299.01 137.96 L301.43 138.45 L303.88 138.88 L306.35 139.27 L308.83 139.62 L311.31 139.92 L313.78 140.17 L316.23 140.38 L318.63 140.54 L320.99 140.66 L323.29 140.73 L325.53 140.76 L327.68 140.75 L329.74 140.69 L331.71 140.60 L333.57 140.47 L335.31 140.30 L336.93 140.11 L338.42 139.88 L339.76 139.62 L340.97 139.33 L342.02 139.03 L342.92 138.70 L343.66 138.35 L344.24 137.99 L344.65 137.62 L344.90 137.24 L344.98 136.85 M272.81 149.35 L272.93 150.47 L273.27 151.60 L273.83 152.72 L274.61 153.83 L275.60 154.92 L276.79 156.00 L278.18 157.04 L279.75 158.06 L281.51 159.04 L283.43 159.99 L285.51 160.89 L287.73 161.75 L290.07 162.56 L292.54 163.32 L295.10 164.03 L297.74 164.68 L300.45 165.27 L303.22 165.80 L306.01 166.27 L308.82 166.68 L311.63 167.03 L314.42 167.31 L317.18 167.53 L319.88 167.70 L322.51 167.80 L325.06 167.84 L327.50 167.83 L329.83 167.76 L332.03 167.64 L334.09 167.47 L335.98 167.25 L337.71 166.99 L339.27 166.69 L340.63 166.36 L341.79 165.99 L342.76 165.60 L343.51 165.19 L344.05 164.75 L344.37 164.31 L344.48 163.86 M273.75 176.34 L273.87 177.48 L274.21 178.61 L274.76 179.74 L275.52 180.85 L276.49 181.95 L277.65 183.03 L279.01 184.09 L280.56 185.11 L282.28 186.10 L284.16 187.05 L286.20 187.96 L288.37 188.82 L290.67 189.64 L293.09 190.40 L295.60 191.11 L298.19 191.76 L300.84 192.36 L303.55 192.89 L306.29 193.36 L309.04 193.77 L311.80 194.12 L314.53 194.40 L317.23 194.63 L319.88 194.79 L322.46 194.89 L324.95 194.93 L327.35 194.91 L329.63 194.84 L331.78 194.71 L333.80 194.54 L335.66 194.31 L337.35 194.05 L338.87 193.74 L340.21 193.40 L341.35 193.03 L342.29 192.63 L343.03 192.21 L343.56 191.77 L343.88 191.32 L343.98 190.86 M274.69 203.34 L274.81 204.48 L275.14 205.62 L275.68 206.76 L276.43 207.88 L277.37 208.99 L278.52 210.07 L279.85 211.13 L281.36 212.16 L283.05 213.16 L284.89 214.11 L286.89 215.03 L289.02 215.89 L291.27 216.71 L293.63 217.48 L296.09 218.19 L298.63 218.85 L301.23 219.44 L303.88 219.98 L306.57 220.45 L309.26 220.86 L311.96 221.21 L314.64 221.50 L317.28 221.72 L319.88 221.88 L322.40 221.97 L324.85 222.01 L327.19 221.99 L329.43 221.91 L331.54 221.78 L333.51 221.60 L335.33 221.38 L336.99 221.11 L338.48 220.80 L339.79 220.45 L340.91 220.07 L341.83 219.67 L342.55 219.24 L343.07 218.79 L343.38 218.33 L343.48 217.86 M275.63 230.33 L275.75 231.48 L276.07 232.63 L276.60 233.77 L277.33 234.90 L278.26 236.02 L279.38 237.11 L280.69 238.17 L282.17 239.21 L283.82 240.21 L285.62 241.17 L287.58 242.09 L289.66 242.97 L291.87 243.79 L294.18 244.56 L296.59 245.28 L299.08 245.94 L301.62 246.53 L304.22 247.07 L306.85 247.55 L309.49 247.96 L312.13 248.30 L314.75 248.59 L317.34 248.81 L319.88 248.96 L322.35 249.06 L324.74 249.09 L327.04 249.07 L329.23 248.99 L331.29 248.86 L333.22 248.67 L335.01 248.44 L336.63 248.17 L338.09 247.85 L339.37 247.50 L340.46 247.11 L341.37 246.70 L342.07 246.26 L342.58 245.81 L342.88 245.34 L342.98 244.87 M276.57 257.33 L276.69 258.49 L277.01 259.64 L277.52 260.79 L278.24 261.93 L279.15 263.05 L280.24 264.15 L281.52 265.22 L282.97 266.26 L284.59 267.27 L286.35 268.24 L288.27 269.16 L290.31 270.04 L292.47 270.87 L294.73 271.64 L297.09 272.36 L299.52 273.02 L302.01 273.62 L304.55 274.16 L307.12 274.56 L309.71 274.70 L312.29 274.78 L314.86 274.80 L317.39 274.74 L319.87 274.63 L322.29 274.45 L324.64 274.21 L326.88 273.92 L329.03 273.56 L331.05 273.16 L332.93 272.70 L334.68 272.19 L336.27 271.64 L337.69 271.05 L338.95 270.42 L340.02 269.76 L340.90 269.07 L341.60 268.36 L342.09 267.63 L342.39 266.88 L342.48 266.13 " fill="none" stroke="#8a0000" stroke-width="13.799999999999999" stroke-linecap="round"/>
<path d="M275.28 128.28 L276.37 129.20 L277.61 130.10 L279.00 130.97 L280.52 131.82 L282.17 132.64 L283.94 133.44 L285.82 134.20 L287.81 134.92 L289.90 135.61 L292.08 136.26 L294.33 136.87 L296.64 137.44 L299.01 137.96 L301.43 138.45 L303.88 138.88 L306.35 139.27 L308.83 139.62 L311.31 139.92 L313.78 140.17 L316.23 140.38 L318.63 140.54 L320.99 140.66 L323.29 140.73 L325.53 140.76 L327.68 140.75 L329.74 140.69 L331.71 140.60 L333.57 140.47 L335.31 140.30 L336.93 140.11 L338.42 139.88 L339.76 139.62 L340.97 139.33 L342.02 139.03 L342.92 138.70 L343.66 138.35 L344.24 137.99 L344.65 137.62 L344.90 137.24 L344.98 136.85 M272.81 149.35 L272.93 150.47 L273.27 151.60 L273.83 152.72 L274.61 153.83 L275.60 154.92 L276.79 156.00 L278.18 157.04 L279.75 158.06 L281.51 159.04 L283.43 159.99 L285.51 160.89 L287.73 161.75 L290.07 162.56 L292.54 163.32 L295.10 164.03 L297.74 164.68 L300.45 165.27 L303.22 165.80 L306.01 166.27 L308.82 166.68 L311.63 167.03 L314.42 167.31 L317.18 167.53 L319.88 167.70 L322.51 167.80 L325.06 167.84 L327.50 167.83 L329.83 167.76 L332.03 167.64 L334.09 167.47 L335.98 167.25 L337.71 166.99 L339.27 166.69 L340.63 166.36 L341.79 165.99 L342.76 165.60 L343.51 165.19 L344.05 164.75 L344.37 164.31 L344.48 163.86 M273.75 176.34 L273.87 177.48 L274.21 178.61 L274.76 179.74 L275.52 180.85 L276.49 181.95 L277.65 183.03 L279.01 184.09 L280.56 185.11 L282.28 186.10 L284.16 187.05 L286.20 187.96 L288.37 188.82 L290.67 189.64 L293.09 190.40 L295.60 191.11 L298.19 191.76 L300.84 192.36 L303.55 192.89 L306.29 193.36 L309.04 193.77 L311.80 194.12 L314.53 194.40 L317.23 194.63 L319.88 194.79 L322.46 194.89 L324.95 194.93 L327.35 194.91 L329.63 194.84 L331.78 194.71 L333.80 194.54 L335.66 194.31 L337.35 194.05 L338.87 193.74 L340.21 193.40 L341.35 193.03 L342.29 192.63 L343.03 192.21 L343.56 191.77 L343.88 191.32 L343.98 190.86 M274.69 203.34 L274.81 204.48 L275.14 205.62 L275.68 206.76 L276.43 207.88 L277.37 208.99 L278.52 210.07 L279.85 211.13 L281.36 212.16 L283.05 213.16 L284.89 214.11 L286.89 215.03 L289.02 215.89 L291.27 216.71 L293.63 217.48 L296.09 218.19 L298.63 218.85 L301.23 219.44 L303.88 219.98 L306.57 220.45 L309.26 220.86 L311.96 221.21 L314.64 221.50 L317.28 221.72 L319.88 221.88 L322.40 221.97 L324.85 222.01 L327.19 221.99 L329.43 221.91 L331.54 221.78 L333.51 221.60 L335.33 221.38 L336.99 221.11 L338.48 220.80 L339.79 220.45 L340.91 220.07 L341.83 219.67 L342.55 219.24 L343.07 218.79 L343.38 218.33 L343.48 217.86 M275.63 230.33 L275.75 231.48 L276.07 232.63 L276.60 233.77 L277.33 234.90 L278.26 236.02 L279.38 237.11 L280.69 238.17 L282.17 239.21 L283.82 240.21 L285.62 241.17 L287.58 242.09 L289.66 242.97 L291.87 243.79 L294.18 244.56 L296.59 245.28 L299.08 245.94 L301.62 246.53 L304.22 247.07 L306.85 247.55 L309.49 247.96 L312.13 248.30 L314.75 248.59 L317.34 248.81 L319.88 248.96 L322.35 249.06 L324.74 249.09 L327.04 249.07 L329.23 248.99 L331.29 248.86 L333.22 248.67 L335.01 248.44 L336.63 248.17 L338.09 247.85 L339.37 247.50 L340.46 247.11 L341.37 246.70 L342.07 246.26 L342.58 245.81 L342.88 245.34 L342.98 244.87 M276.57 257.33 L276.69 258.49 L277.01 259.64 L277.52 260.79 L278.24 261.93 L279.15 263.05 L280.24 264.15 L281.52 265.22 L282.97 266.26 L284.59 267.27 L286.35 268.24 L288.27 269.16 L290.31 270.04 L292.47 270.87 L294.73 271.64 L297.09 272.36 L299.52 273.02 L302.01 273.62 L304.55 274.16 L307.12 274.56 L309.71 274.70 L312.29 274.78 L314.86 274.80 L317.39 274.74 L319.87 274.63 L322.29 274.45 L324.64 274.21 L326.88 273.92 L329.03 273.56 L331.05 273.16 L332.93 272.70 L334.68 272.19 L336.27 271.64 L337.69 271.05 L338.95 270.42 L340.02 269.76 L340.90 269.07 L341.60 268.36 L342.09 267.63 L342.39 266.88 L342.48 266.13 " fill="none" stroke="#d80000" stroke-width="12.6" stroke-linecap="round"/>
<path d="M275.28 128.28 L276.37 129.20 L277.61 130.10 L279.00 130.97 L280.52 131.82 L282.17 132.64 L283.94 133.44 L285.82 134.20 L287.81 134.92 L289.90 135.61 L292.08 136.26 L294.33 136.87 L296.64 137.44 L299.01 137.96 L301.43 138.45 L303.88 138.88 L306.35 139.27 L308.83 139.62 L311.31 139.92 L313.78 140.17 L316.23 140.38 L318.63 140.54 L320.99 140.66 L323.29 140.73 L325.53 140.76 L327.68 140.75 L329.74 140.69 L331.71 140.60 L333.57 140.47 L335.31 140.30 L336.93 140.11 L338.42 139.88 L339.76 139.62 L340.97 139.33 L342.02 139.03 L342.92 138.70 L343.66 138.35 L344.24 137.99 L344.65 137.62 L344.90 137.24 L344.98 136.85 M272.81 149.35 L272.93 150.47 L273.27 151.60 L273.83 152.72 L274.61 153.83 L275.60 154.92 L276.79 156.00 L278.18 157.04 L279.75 158.06 L281.51 159.04 L283.43 159.99 L285.51 160.89 L287.73 161.75 L290.07 162.56 L292.54 163.32 L295.10 164.03 L297.74 164.68 L300.45 165.27 L303.22 165.80 L306.01 166.27 L308.82 166.68 L311.63 167.03 L314.42 167.31 L317.18 167.53 L319.88 167.70 L322.51 167.80 L325.06 167.84 L327.50 167.83 L329.83 167.76 L332.03 167.64 L334.09 167.47 L335.98 167.25 L337.71 166.99 L339.27 166.69 L340.63 166.36 L341.79 165.99 L342.76 165.60 L343.51 165.19 L344.05 164.75 L344.37 164.31 L344.48 163.86 M273.75 176.34 L273.87 177.48 L274.21 178.61 L274.76 179.74 L275.52 180.85 L276.49 181.95 L277.65 183.03 L279.01 184.09 L280.56 185.11 L282.28 186.10 L284.16 187.05 L286.20 187.96 L288.37 188.82 L290.67 189.64 L293.09 190.40 L295.60 191.11 L298.19 191.76 L300.84 192.36 L303.55 192.89 L306.29 193.36 L309.04 193.77 L311.80 194.12 L314.53 194.40 L317.23 194.63 L319.88 194.79 L322.46 194.89 L324.95 194.93 L327.35 194.91 L329.63 194.84 L331.78 194.71 L333.80 194.54 L335.66 194.31 L337.35 194.05 L338.87 193.74 L340.21 193.40 L341.35 193.03 L342.29 192.63 L343.03 192.21 L343.56 191.77 L343.88 191.32 L343.98 190.86 M274.69 203.34 L274.81 204.48 L275.14 205.62 L275.68 206.76 L276.43 207.88 L277.37 208.99 L278.52 210.07 L279.85 211.13 L281.36 212.16 L283.05 213.16 L284.89 214.11 L286.89 215.03 L289.02 215.89 L291.27 216.71 L293.63 217.48 L296.09 218.19 L298.63 218.85 L301.23 219.44 L303.88 219.98 L306.57 220.45 L309.26 220.86 L311.96 221.21 L314.64 221.50 L317.28 221.72 L319.88 221.88 L322.40 221.97 L324.85 222.01 L327.19 221.99 L329.43 221.91 L331.54 221.78 L333.51 221.60 L335.33 221.38 L336.99 221.11 L338.48 220.80 L339.79 220.45 L340.91 220.07 L341.83 219.67 L342.55 219.24 L343.07 218.79 L343.38 218.33 L343.48 217.86 M275.63 230.33 L275.75 231.48 L276.07 232.63 L276.60 233.77 L277.33 234.90 L278.26 236.02 L279.38 237.11 L280.69 238.17 L282.17 239.21 L283.82 240.21 L285.62 241.17 L287.58 242.09 L289.66 242.97 L291.87 243.79 L294.18 244.56 L296.59 245.28 L299.08 245.94 L301.62 246.53 L304.22 247.07 L306.85 247.55 L309.49 247.96 L312.13 248.30 L314.75 248.59 L317.34 248.81 L319.88 248.96 L322.35 249.06 L324.74 249.09 L327.04 249.07 L329.23 248.99 L331.29 248.86 L333.22 248.67 L335.01 248.44 L336.63 248.17 L338.09 247.85 L339.37 247.50 L340.46 247.11 L341.37 246.70 L342.07 246.26 L342.58 245.81 L342.88 245.34 L342.98 244.87 M276.57 257.33 L276.69 258.49 L277.01 259.64 L277.52 260.79 L278.24 261.93 L279.15 263.05 L280.24 264.15 L281.52 265.22 L282.97 266.26 L284.59 267.27 L286.35 268.24 L288.27 269.16 L290.31 270.04 L292.47 270.87 L294.73 271.64 L297.09 272.36 L299.52 273.02 L302.01 273.62 L304.55 274.16 L307.12 274.56 L309.71 274.70 L312.29 274.78 L314.86 274.80 L317.39 274.74 L319.87 274.63 L322.29 274.45 L324.64 274.21 L326.88 273.92 L329.03 273.56 L331.05 273.16 L332.93 272.70 L334.68 272.19 L336.27 271.64 L337.69 271.05 L338.95 270.42 L340.02 269.76 L340.90 269.07 L341.60 268.36 L342.09 267.63 L342.39 266.88 L342.48 266.13 " fill="none" stroke="#ff0000" stroke-width="11.0" stroke-linecap="round"/>
<path d="M349.50 125.50 L349.38 126.09 L349.01 126.67 L348.39 127.25 L347.54 127.82 L346.46 128.37 L345.14 128.90 L343.61 129.42 L341.86 129.91 L339.92 130.37 L337.78 130.80 L335.48 131.20 L333.01 131.57 L330.40 131.89 L327.66 132.18 L324.81 132.43 L321.86 132.63 L318.84 132.79 L315.76 132.91 L312.64 132.98 L309.50 133.00 L306.36 132.98 L303.24 132.91 L300.16 132.79 L297.14 132.63 L294.19 132.43 L291.34 132.18 L288.60 131.89 L285.99 131.57 L283.52 131.20 L281.22 130.80 L279.08 130.37 L277.14 129.91 L275.39 129.42 L273.86 128.90 L272.54 128.37 L271.46 127.82 L270.61 127.25 L269.99 126.67 L269.62 126.09 L269.50 125.50 L270.50 127.50 L270.62 128.01 L270.98 128.52 L271.58 129.02 L272.41 129.51 L273.47 129.99 L274.75 130.45 L276.25 130.90 L277.95 131.32 L279.84 131.72 L281.92 132.10 L284.17 132.44 L286.58 132.76 L289.12 133.04 L291.79 133.29 L294.58 133.51 L297.45 133.68 L300.40 133.82 L303.40 133.92 L306.44 133.98 L309.50 134.00 L312.56 133.98 L315.60 133.92 L318.60 133.82 L321.55 133.68 L324.42 133.51 L327.21 133.29 L329.88 133.04 L332.42 132.76 L334.83 132.44 L337.08 132.10 L339.16 131.72 L341.05 131.32 L342.75 130.90 L344.25 130.45 L345.53 129.99 L346.59 129.51 L347.42 129.02 L348.02 128.52 L348.38 128.01 L348.50 127.50 Z" fill="#4f4a49" stroke="#3a3535" stroke-width="0.5"/>
<ellipse cx="309.5" cy="125.5" rx="40" ry="7.5" fill="#5b5554"/>
<path d="M352.00 116.50 L351.87 117.25 L351.47 117.99 L350.81 118.72 L349.90 119.44 L348.73 120.14 L347.31 120.81 L345.66 121.46 L343.79 122.08 L341.70 122.67 L339.41 123.22 L336.93 123.72 L334.27 124.19 L331.47 124.60 L328.52 124.96 L325.46 125.28 L322.29 125.54 L319.04 125.74 L315.73 125.88 L312.37 125.97 L309.00 126.00 L305.63 125.97 L302.27 125.88 L298.96 125.74 L295.71 125.54 L292.54 125.28 L289.48 124.96 L286.53 124.60 L283.73 124.19 L281.07 123.72 L278.59 123.22 L276.30 122.67 L274.21 122.08 L272.34 121.46 L270.69 120.81 L269.27 120.14 L268.10 119.44 L267.19 118.72 L266.53 117.99 L266.13 117.25 L266.00 116.50 L266.00 121.50 L266.13 122.25 L266.53 122.99 L267.19 123.72 L268.10 124.44 L269.27 125.14 L270.69 125.81 L272.34 126.46 L274.21 127.08 L276.30 127.67 L278.59 128.22 L281.07 128.72 L283.73 129.19 L286.53 129.60 L289.48 129.96 L292.54 130.28 L295.71 130.54 L298.96 130.74 L302.27 130.88 L305.63 130.97 L309.00 131.00 L312.37 130.97 L315.73 130.88 L319.04 130.74 L322.29 130.54 L325.46 130.28 L328.52 129.96 L331.47 129.60 L334.27 129.19 L336.93 128.72 L339.41 128.22 L341.70 127.67 L343.79 127.08 L345.66 126.46 L347.31 125.81 L348.73 125.14 L349.90 124.44 L350.81 123.72 L351.47 122.99 L351.87 122.25 L352.00 121.50 Z" fill="#5e5857" stroke="#3a3535" stroke-width="0.6"/>
<path d="M266 118.6 A43 9.5 0 0 0 352 118.6" fill="none" stroke="#777170" stroke-width="0.7"/>
<ellipse cx="309.0" cy="116.5" rx="43" ry="9.5" fill="#504b4a" stroke="#3e3939" stroke-width="0.5"/>
<circle cx="277.5" cy="119.5" r="0.8" fill="#a03030"/>
<path d="M300.7 109 L316.6 109 L316.6 116.5 Q308.7 118.2 300.7 116.5 Z" fill="#575150"/>
<path d="M300.7 113 Q308.7 115.5 316.6 113" fill="none" stroke="#3e3939" stroke-width="0.6"/>
<ellipse cx="308.6" cy="116" rx="6.8" ry="1.3" fill="#7a7270"/>
<ellipse cx="301.5" cy="77.5" rx="29.0" ry="31.0" fill="#524c4b" stroke="#3a3535" stroke-width="0.6"/>
<path d="M301.5 46.5 L313.5 48.0 L313.5 111.0 L301.5 108.5 Z" fill="#57514f"/>
<path d="M300.5 46.8 L313.5 48.0" stroke="#3a3535" stroke-width="0.6"/>
<ellipse cx="313.5" cy="79.5" rx="29.5" ry="31.5" fill="#6c6563" stroke="#3a3535" stroke-width="0.7"/>
<ellipse cx="314.2" cy="82" rx="26.8" ry="28.3" fill="#625b59" stroke="#322e2e" stroke-width="1"/>
<ellipse cx="314.1" cy="81.8" rx="21" ry="21.8" fill="none" stroke="#4a4545" stroke-width="0.5"/>
<ellipse cx="314.4" cy="81.6" rx="17.6" ry="17.6" fill="#f2f2f2" stroke="#6a6a6a" stroke-width="0.7"/>
<ellipse cx="314.4" cy="81.6" rx="16" ry="16" fill="none" stroke="#a8a8a8" stroke-width="0.6"/>
<ellipse cx="315.6" cy="82.2" rx="13.7" ry="14.2" fill="url(#gHole)" stroke="#a8a8a8" stroke-width="0.6"/>
<path d="M315.3 68 A13.7 14.2 0 0 0 303 91.8 Q320.5 82 315.3 68 Z" fill="#d3d0b9"/>
<path d="M315.3 68 Q320.5 82 303 91.8" fill="none" stroke="#2a2a2a" stroke-width="0.8"/>
<path d="M303 91.8 Q309 95.5 318 96" fill="none" stroke="#7a7a7a" stroke-width="0.6"/>
<path d="M308.6 70 L308.6 95.3" stroke="#7878cc" stroke-width="1"/>
<path d="M309.0 268.5 L445 383.5" stroke="#c8766a" stroke-width="1.1" clip-path="url(#axclipR)"/>
<path d="M255 284.2 L281 276.6" stroke="#9fcc90" stroke-width="1" stroke-dasharray="1.3 1.3"/>
</g></svg>
<svg class="abs" style="left:0;top:380px" width="630" height="20" viewBox="0 380 630 20">
<defs><radialGradient id="gCoin" cx="0.45" cy="0.4" r="0.6"><stop offset="0" stop-color="#fbf6ea"/><stop offset="1" stop-color="#e6dcc0"/></radialGradient>
<radialGradient id="gHelp" cx="0.4" cy="0.35" r="0.7"><stop offset="0" stop-color="#f4f8fc"/><stop offset="0.55" stop-color="#bcd0e4"/><stop offset="1" stop-color="#6a90b8"/></radialGradient></defs>
<circle cx="11.8" cy="388.9" r="4.9" fill="url(#gCoin)" stroke="#a5854c" stroke-width="1.5"/>
<circle cx="11.6" cy="388.2" r="1.3" fill="#e8a0a0" opacity="0.8"/>
<circle cx="26.5" cy="388.9" r="4.9" fill="url(#gCoin)" stroke="#a5854c" stroke-width="1.5"/>
<circle cx="26.3" cy="388.6" r="1.3" fill="#b8b8b8" opacity="0.8"/>
<circle cx="41.7" cy="388.9" r="4.9" fill="url(#gCoin)" stroke="#a5854c" stroke-width="1.5"/>
<circle cx="41.4" cy="388.6" r="1.6" fill="#f4f4ee" stroke="#c8c8c0" stroke-width="0.5"/>
<rect x="52" y="383" width="1" height="11" fill="#d6d6d6"/>
<circle cx="62.2" cy="389.2" r="4.9" fill="url(#gHelp)" stroke="#2c5a88" stroke-width="1.3"/>
<text x="62.3" y="392.3" font-family="Liberation Sans" font-size="8" font-weight="bold" fill="#2a2a2a" text-anchor="middle">?</text>
<rect x="70" y="383" width="359.5" height="1" fill="#d8d8d8"/>
<rect x="429" y="383" width="1" height="11" fill="#d0d0d0"/>
<rect x="504" y="383" width="112" height="1" fill="#d8d8d8"/>
<rect x="504" y="383" width="1" height="11" fill="#d8d8d8"/>
<path d="M624.5 387 L618 393.5 M624.5 389.5 L620.5 393.5 M624.5 392 L623 393.5" stroke="#b0b0b0" stroke-width="0.7"/>
</svg>
<div class="abs" style="left:72.2px;top:385.6px;font-size:7.1px;color:#2f2f2f;white-space:nowrap;">Sélectionnez les objets. Appuyez sur Maj pour étendre la sélection. Faites glisser la souris pour sélectionner plus</div>
<div class="abs" style="left:476px;top:385.6px;font-size:7px;color:#2f2f2f;white-space:nowrap;">Mesures</div>
</body></html>
